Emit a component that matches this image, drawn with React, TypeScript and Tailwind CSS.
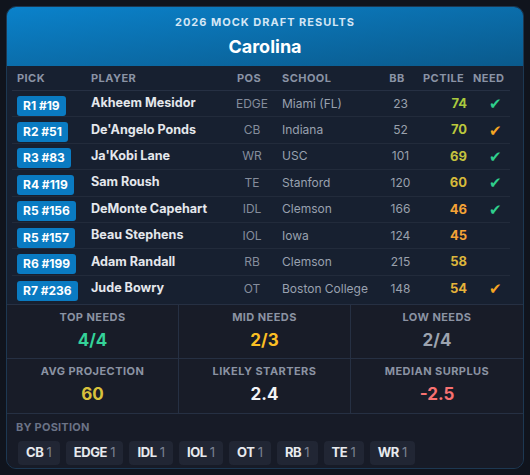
import React from "react";

type Row = { pick: string; name: string; pos: string; school: string; bb: number; pct: number; pctColor: string; need?: "g" | "o" };

const rows: Row[] = [
  { pick: "R1 #19", name: "Akheem Mesidor", pos: "EDGE", school: "Miami (FL)", bb: 23, pct: 74, pctColor: "text-[#a9c93e]", need: "g" },
  { pick: "R2 #51", name: "De'Angelo Ponds", pos: "CB", school: "Indiana", bb: 52, pct: 70, pctColor: "text-[#bcc83c]", need: "o" },
  { pick: "R3 #83", name: "Ja'Kobi Lane", pos: "WR", school: "USC", bb: 101, pct: 69, pctColor: "text-[#c3c23e]", need: "g" },
  { pick: "R4 #119", name: "Sam Roush", pos: "TE", school: "Stanford", bb: 120, pct: 60, pctColor: "text-[#d6ba3a]", need: "g" },
  { pick: "R5 #156", name: "DeMonte Capehart", pos: "IDL", school: "Clemson", bb: 166, pct: 46, pctColor: "text-[#f5a336]", need: "g" },
  { pick: "R5 #157", name: "Beau Stephens", pos: "IOL", school: "Iowa", bb: 124, pct: 45, pctColor: "text-[#f5a336]" },
  { pick: "R6 #199", name: "Adam Randall", pos: "RB", school: "Clemson", bb: 215, pct: 58, pctColor: "text-[#dcb63c]" },
  { pick: "R7 #236", name: "Jude Bowry", pos: "OT", school: "Boston College", bb: 148, pct: 54, pctColor: "text-[#e6b33a]", need: "o" },
];

const stats = [
  { label: "TOP NEEDS", value: "4/4", color: "text-[#34d399]" },
  { label: "MID NEEDS", value: "2/3", color: "text-[#fbbf24]" },
  { label: "LOW NEEDS", value: "2/4", color: "text-[#9ca3af]" },
  { label: "AVG PROJECTION", value: "60", color: "text-[#d9c23c]" },
  { label: "LIKELY STARTERS", value: "2.4", color: "text-[#f3f4f6]" },
  { label: "MEDIAN SURPLUS", value: "-2.5", color: "text-[#f87171]" },
];

const chips = ["CB", "EDGE", "IDL", "IOL", "OT", "RB", "TE", "WR"];

export default function App() {
  return (
    <div className="w-[530px] h-[475px] bg-[#10141d] p-[6px] box-border" style={{ fontFamily: "Inter, 'Noto Sans', sans-serif" }}>
      <div className="h-[463px] rounded-[10px] border border-[#1d3852] overflow-hidden bg-[#172030] flex flex-col">
        <div className="h-[59px] bg-gradient-to-br from-[#0a82cb] to-[#0a5a8c] flex flex-col items-center">
          <div className="mt-[8px] text-[11px] font-bold tracking-[0.09em] text-[#d4e6f5] leading-[14px]">2026 MOCK DRAFT RESULTS</div>
          <div className="mt-[7px] text-[18px] font-bold text-white leading-[22px]">Carolina</div>
        </div>
        <div className="ml-[5px] w-[498px] pb-[2px]">
          <div className="flex h-[25px] items-center border-b border-[#263043] text-[11px] font-bold tracking-[0.04em] text-[#8a93a5]">
            <div className="w-[79px] pl-[5px]">PICK</div>
            <div className="w-[134px]">PLAYER</div>
            <div className="w-[54px] text-center pr-[6px]">POS</div>
            <div className="w-[96px] pl-[3px]">SCHOOL</div>
            <div className="w-[46px] text-center pr-[2px]">BB</div>
            <div className="w-[49px] pl-[2px]">PCTILE</div>
            <div className="w-[40px] pl-[3px]">NEED</div>
          </div>
          {rows.map((r, i) => (
            <div key={i} className={`flex h-[26.4px] items-center ${i < rows.length - 1 ? "border-b border-[#222b3b]" : ""}`}>
              <div className="w-[79px] pl-[5px]">
                <span className="inline-block rounded-[3px] bg-[#0a7bc2] px-[6px] h-[20px] leading-[20px] text-[12px] font-bold text-white">{r.pick}</span>
              </div>
              <div className="w-[134px] text-[12.6px] font-bold text-[#e4e7ec] whitespace-nowrap">{r.name}</div>
              <div className="w-[54px] text-center text-[12px] text-[#858d9c]">{r.pos}</div>
              <div className="w-[96px] pl-[3px] text-[12px] text-[#99a1af] whitespace-nowrap">{r.school}</div>
              <div className="w-[46px] text-center pl-[5px] text-[12px] text-[#9aa1ad]">{r.bb}</div>
              <div className={`w-[49px] text-right pr-[3px] text-[13px] font-bold ${r.pctColor}`}>{r.pct}</div>
              <div className="w-[40px] pl-[19px] text-[15px] leading-[15px]">
                {r.need === "g" && <span className="text-[#2fcf8c]">✔</span>}
                {r.need === "o" && <span className="text-[#f6a623]">✔</span>}
              </div>
            </div>
          ))}
        </div>
        <div className="grid grid-cols-3 border-t border-[#263043] bg-[#181c28]">
          {stats.map((s, i) => (
            <div
              key={i}
              className={`h-[54px] flex flex-col items-center ${i % 3 !== 2 ? "border-r border-[#263043]" : ""} ${i < 3 ? "border-b border-[#263043]" : ""}`}
            >
              <div className="mt-[5px] text-[11px] font-bold tracking-[0.04em] text-[#8b93a3] leading-[14px]">{s.label}</div>
              <div className={`mt-[6px] text-[17px] font-bold leading-[20px] ${s.color}`}>{s.value}</div>
            </div>
          ))}
        </div>
        <div className="flex-1 bg-[#171b27] border-t border-[#263043] px-[9px]">
          <div className="mt-[6px] text-[11px] font-bold tracking-[0.02em] text-[#6b7386] leading-[14px]">BY POSITION</div>
          <div className="mt-[7px] flex gap-[6px] pl-[2px]">
            {chips.map((c) => (
              <div key={c} className="h-[24px] rounded-[4px] bg-[#212634] px-[8px] flex items-center text-[13px]">
                <span className="font-bold text-[#e8eaee] tracking-[-0.03em]">{c}</span>
                <span className="ml-[3px] text-[#7b8393]">1</span>
              </div>
            ))}
          </div>
        </div>
      </div>
    </div>
  );
}
